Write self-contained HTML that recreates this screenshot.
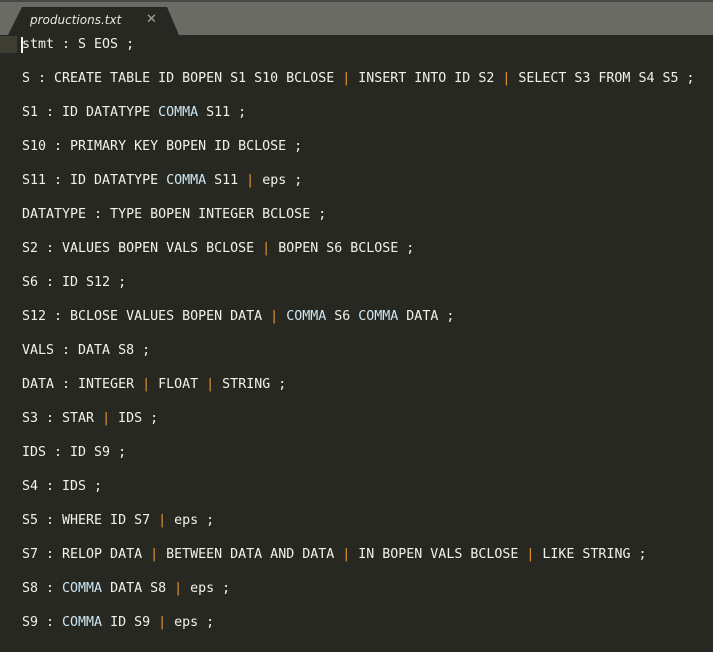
<!DOCTYPE html>
<html><head><style>
html,body{margin:0;padding:0;width:713px;height:652px;overflow:hidden;background:#272822;}
.top{position:absolute;left:0;top:0;width:713px;height:2px;background:#4a4845;}
.bar{position:absolute;left:0;top:2px;width:713px;height:33px;background:#6b6b66;}
.tab{position:absolute;left:0;top:0;}
.tabt{position:absolute;left:30px;top:13px;font:italic 12px "DejaVu Sans","Liberation Sans",sans-serif;color:#e8e8e2;}
.x{position:absolute;left:146px;top:12px;font:bold 13px "DejaVu Sans",sans-serif;color:#a8a8a2;}
.hl{position:absolute;left:0;top:36px;width:17px;height:17px;background:#3e3d32;}
.cur{position:absolute;left:21px;top:37px;width:2px;height:16px;background:#f8f8f0;}
pre{position:absolute;left:22px;top:36px;margin:0;font:13.3px/34px "DejaVu Sans Mono","Liberation Mono",monospace;color:#f4f2e6;}
pre div{height:34px;line-height:17px;}
.p{color:#e8962c}.c{color:#cde6f2}
</style></head><body>
<div class="top"></div><div class="bar"></div>
<svg class="tab" width="200" height="36"><path d="M8 35 L22 7 L167 7 L179 35 Z" fill="#272822"/></svg>
<div class="tabt">productions.txt</div><div class="x">✕</div>
<div class="hl"></div>
<pre><div>stmt : S EOS ;</div><div>S : CREATE TABLE ID BOPEN S1 S10 BCLOSE <span class="p">|</span> INSERT INTO ID S2 <span class="p">|</span> SELECT S3 FROM S4 S5 ;</div><div>S1 : ID DATATYPE <span class="c">COMMA</span> S11 ;</div><div>S10 : PRIMARY KEY BOPEN ID BCLOSE ;</div><div>S11 : ID DATATYPE <span class="c">COMMA</span> S11 <span class="p">|</span> eps ;</div><div>DATATYPE : TYPE BOPEN INTEGER BCLOSE ;</div><div>S2 : VALUES BOPEN VALS BCLOSE <span class="p">|</span> BOPEN S6 BCLOSE ;</div><div>S6 : ID S12 ;</div><div>S12 : BCLOSE VALUES BOPEN DATA <span class="p">|</span> <span class="c">COMMA</span> S6 <span class="c">COMMA</span> DATA ;</div><div>VALS : DATA S8 ;</div><div>DATA : INTEGER <span class="p">|</span> FLOAT <span class="p">|</span> STRING ;</div><div>S3 : STAR <span class="p">|</span> IDS ;</div><div>IDS : ID S9 ;</div><div>S4 : IDS ;</div><div>S5 : WHERE ID S7 <span class="p">|</span> eps ;</div><div>S7 : RELOP DATA <span class="p">|</span> BETWEEN DATA AND DATA <span class="p">|</span> IN BOPEN VALS BCLOSE <span class="p">|</span> LIKE STRING ;</div><div>S8 : <span class="c">COMMA</span> DATA S8 <span class="p">|</span> eps ;</div><div>S9 : <span class="c">COMMA</span> ID S9 <span class="p">|</span> eps ;</div></pre>
<div class="cur"></div>
</body></html>
